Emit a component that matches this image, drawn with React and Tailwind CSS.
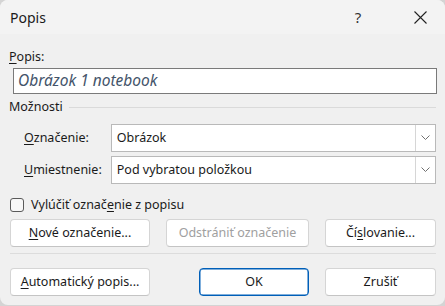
import React, { useState } from 'react';

const font = { fontFamily: '"Noto Sans", "Open Sans", sans-serif' };

const U = ({ children }) => <span className="underline underline-offset-2">{children}</span>;

const Chevron = () => (
  <svg width="9" height="6" viewBox="0 0 9 6" fill="none">
    <polyline points="0.5,0.5 4.5,4.5 8.5,0.5" stroke="#707070" strokeWidth="1" />
  </svg>
);

const SelectBox = ({ value }) => (
  <div className="flex h-[28px] w-[326px] items-stretch border border-[#b9b9b9] bg-white">
    <div className="flex flex-1 items-center pl-[5px] text-[12.5px] text-[#1a1a1a]">{value}</div>
    <div className="flex w-[20px] items-center justify-center border-l border-[#d6d6d6]">
      <Chevron />
    </div>
  </div>
);

const Btn = ({ children, w, disabled, primary }) => (
  <button
    type="button"
    disabled={disabled}
    className={`flex h-[28px] items-center justify-center rounded-[4px] bg-white text-[12.5px] ${w} ${
      primary
        ? 'border border-[#005fb8] text-[#1a1a1a] shadow-[inset_0_0_0_0.5px_#005fb8]'
        : 'border border-[#d5d5d5] border-b-[#c4c4c4] text-[#1a1a1a]'
    } ${disabled ? 'text-[#a0a0a0]' : ''}`}
  >
    {children}
  </button>
);

export default function App() {
  const [exclude, setExclude] = useState(false);

  return (
    <div className="h-[306px] w-[445px] bg-[#d4d4d4]" style={font}>
      <div className="flex h-[305px] w-[445px] flex-col overflow-hidden rounded-[8px] bg-[#f0f0f0] text-[#1a1a1a]">
        {/* Title bar */}
        <div className="flex h-[34px] items-center bg-[#f3f3f3]">
          <div className="flex-1 pl-[10px] text-[14px]">Popis</div>
          <div className="flex w-[46px] justify-center text-[15px] text-[#333]">?</div>
          <div className="w-[14px]" />
          <div className="flex w-[50px] justify-center">
            <svg width="13" height="13" viewBox="0 0 13 13">
              <path d="M0.5 0.5 L12.5 12.5 M12.5 0.5 L0.5 12.5" stroke="#222" strokeWidth="1.1" />
            </svg>
          </div>
        </div>

        <div className="flex flex-col px-[9px]">
          <div className="mt-[15px] h-[16px] text-[12.5px] leading-[16px]">
            <U>P</U>opis:
          </div>
          <div className="ml-[4px] mt-[3px] flex h-[26px] w-[424px] items-center border border-[#7a7a7a] bg-white pl-[4px] text-[15.5px] italic text-[#44546a]">
            Obrázok 1 notebook
          </div>

          <div className="mt-[5px] flex h-[16px] items-center text-[12.5px]">
            <span>Možnosti</span>
            <div className="ml-[6px] h-px flex-1 bg-[#dadada]" />
          </div>

          <div className="mt-[9px] flex flex-col gap-[4px] pl-[15px] text-[12.5px]">
            <div className="flex items-center">
              <div className="w-[87px]">
                <U>O</U>značenie:
              </div>
              <SelectBox value="Obrázok" />
            </div>
            <div className="flex items-center">
              <div className="w-[87px]">
                <U>U</U>miestnenie:
              </div>
              <SelectBox value="Pod vybratou položkou" />
            </div>
          </div>

          <label className="ml-[1px] mt-[14px] flex h-[14px] cursor-default items-center gap-[7px] text-[12.5px]">
            <span
              onClick={() => setExclude(!exclude)}
              className="h-[14px] w-[14px] rounded-[3px] border border-[#5a5a5a] bg-[#f7f7f7]"
            />
            <span>
              Vylúčiť označ<U>e</U>nie z popisu
            </span>
          </label>

          <div className="ml-[1px] mt-[7px] flex gap-[16px]">
            <Btn w="w-[140px]">
              <U>N</U>ové označenie...
            </Btn>
            <Btn w="w-[143px]" disabled>
              Odstrániť označenie
            </Btn>
            <Btn w="w-[111px]">
              Čí<U>s</U>lovanie...
            </Btn>
          </div>

          <div className="ml-[1px] mt-[6px] h-px w-[426px] bg-[#dcdcdc]" />

          <div className="ml-[1px] mt-[14px] flex">
            <Btn w="w-[140px]">
              <U>A</U>utomatický popis...
            </Btn>
            <div className="w-[49px]" />
            <Btn w="w-[110px]" primary>
              OK
            </Btn>
            <div className="w-[16px]" />
            <Btn w="w-[111px]">Zrušiť</Btn>
          </div>
        </div>
      </div>
    </div>
  );
}
